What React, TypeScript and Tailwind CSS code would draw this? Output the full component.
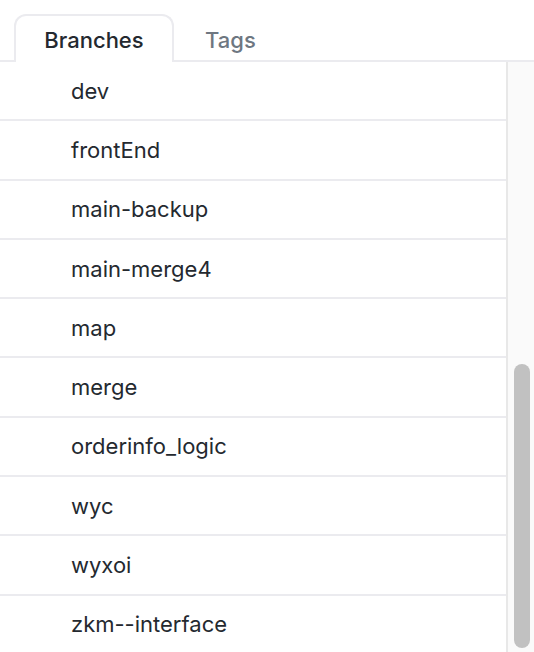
const branches = [
  'dev',
  'frontEnd',
  'main-backup',
  'main-merge4',
  'map',
  'merge',
  'orderinfo_logic',
  'wyc',
  'wyxoi',
  'zkm--interface',
];

export default function App() {
  return (
    <div className="flex h-screen flex-col overflow-hidden bg-white font-['Inter',sans-serif] text-[#24292f]">
      <div role="tablist" className="flex shrink-0 items-end border-b-2 border-[#ebebef] pt-3.5 pl-3.5 text-[22px] leading-8 font-medium">
        <button type="button" role="tab" aria-selected="true" className="-mb-0.5 h-12 w-40 rounded-t-xl border-2 border-b-0 border-[#ebebef] bg-white pt-0.5">
          Branches
        </button>
        <button type="button" role="tab" aria-selected="false" className="-mb-0.5 h-12 px-[31px] pt-1 text-[#6e7781]">
          Tags
        </button>
      </div>
      <div className="flex min-h-0 flex-1">
        <ul className="-mb-[3px] grid min-w-0 flex-1 auto-rows-fr">
          {branches.map((name) => (
            <li key={name} className="border-b-2 border-[#ebebef]">
              <button type="button" className="block h-full w-full pl-[71px] text-left text-[22px] leading-8">
                {name}
              </button>
            </li>
          ))}
        </ul>
        <div className="flex w-7 shrink-0 flex-col justify-end border-l-2 border-[#e8e8e8] bg-[#fafafa] pb-1 pl-1.5">
          <div className="h-[284px] w-4 rounded-full bg-[#c1c1c1]" />
        </div>
      </div>
    </div>
  );
}
